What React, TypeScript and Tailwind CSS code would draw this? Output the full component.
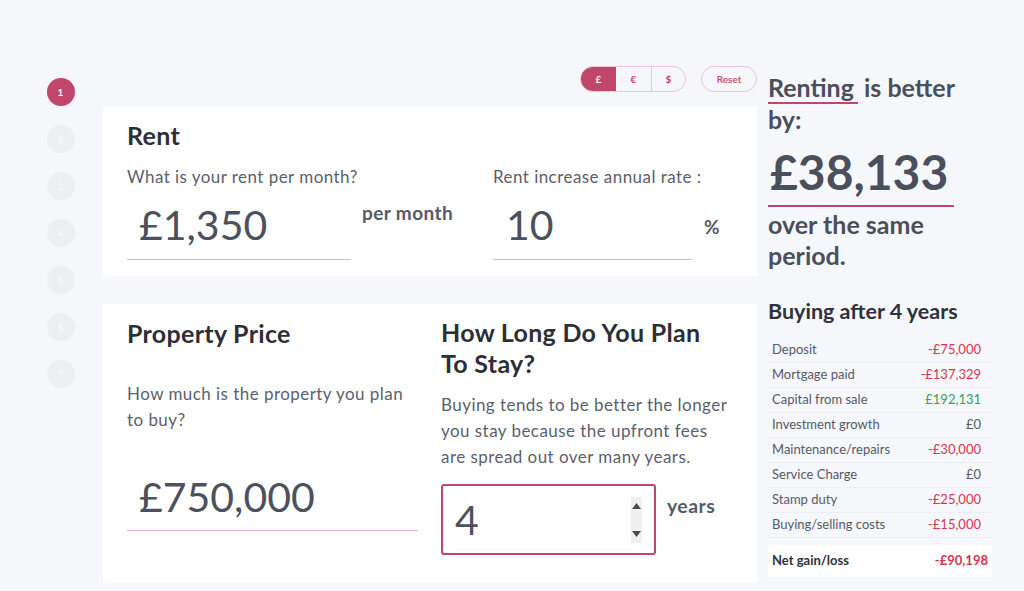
import React from "react";

function Steps() {
  return (
    <div className="w-[103px] shrink-0 flex flex-col items-center pt-[78px] gap-[19px] pl-[18px]">
      {[1, 2, 3, 4, 5, 6, 7].map((n) => (
        <div
          key={n}
          className={
            n === 1
              ? "w-[28px] h-[28px] rounded-full bg-[#c1466b] text-white text-[10px] font-bold flex items-center justify-center"
              : "w-[28px] h-[28px] rounded-full bg-[#eeeff2] text-[#f9f9fb] text-[10px] font-bold flex items-center justify-center"
          }
        >
          {n}
        </div>
      ))}
    </div>
  );
}

function Spinner() {
  return (
    <div className="w-[11px] h-[46px] bg-[#efefef] flex flex-col items-center justify-between py-[6px]">
      <svg width="9" height="6" viewBox="0 0 9 6">
        <path d="M0 6 L4.5 0 L9 6 Z" fill="#4a4a4a" />
      </svg>
      <svg width="9" height="6" viewBox="0 0 9 6">
        <path d="M0 0 L4.5 6 L9 0 Z" fill="#4a4a4a" />
      </svg>
    </div>
  );
}

const rows: [string, string, string][] = [
  ["Deposit", "-£75,000", "red"],
  ["Mortgage paid", "-£137,329", "red"],
  ["Capital from sale", "£192,131", "green"],
  ["Investment growth", "£0", "gray"],
  ["Maintenance/repairs", "-£30,000", "red"],
  ["Service Charge", "£0", "gray"],
  ["Stamp duty", "-£25,000", "red"],
  ["Buying/selling costs", "-£15,000", "red"],
];

export default function App() {
  return (
    <div
      className="w-[1024px] h-[591px] bg-[#f6f7fb] flex overflow-hidden text-[#5b5f6b]"
      style={{ fontFamily: "Lato, 'Noto Sans', sans-serif" }}
    >
      <Steps />
      {/* Main column */}
      <div className="w-[654px] shrink-0 flex flex-col pt-[66px]">
        <div className="flex justify-end items-center gap-[15px] h-[26px]">
          <div className="flex h-[26px] rounded-full border-[1.5px] border-[#ecc8d3] overflow-hidden text-[10px] font-bold">
            <div className="w-[35px] bg-[#c1466b] text-white flex items-center justify-center">£</div>
            <div className="w-[36px] text-[#c1466b] flex items-center justify-center border-r-[1.5px] border-[#ecc8d3]">€</div>
            <div className="w-[33px] text-[#c1466b] flex items-center justify-center">$</div>
          </div>
          <div className="w-[56px] h-[26px] rounded-full border-[1.5px] border-[#ecc8d3] text-[#c1466b] text-[10px] font-semibold flex items-center justify-center">
            Reset
          </div>
        </div>

        {/* Rent panel */}
        <div className="mt-[15px] h-[169px] bg-white pl-[24px] pt-[12px]">
          <h2 className="text-[25px] leading-[32px] font-bold text-[#2d2f36] tracking-[0.3px]">Rent</h2>
          <div className="flex mt-[14px]">
            <div className="w-[366px] shrink-0">
              <div className="text-[17px] leading-[24px] tracking-[0.45px]">What is your rent per month?</div>
              <div className="flex items-start">
                <div className="w-[224px] h-[71px] border-b border-[#e3b5c2] pl-[12px] flex items-center text-[41px] font-normal text-[#4d515c] pt-[2px]">
                  £1,350
                </div>
                <div className="ml-[11px] mt-[10px] text-[19px] font-bold text-[#555a66] tracking-[0.4px]">per month</div>
              </div>
            </div>
            <div>
              <div className="text-[17px] leading-[24px] tracking-[0.45px]">Rent increase annual rate :</div>
              <div className="flex items-start">
                <div className="w-[199px] h-[71px] border-b border-[#e3b5c2] pl-[13px] flex items-center text-[41px] font-normal text-[#4d515c] pt-[2px]">
                  10
                </div>
                <div className="ml-[12px] mt-[24px] text-[19px] font-bold text-[#555a66]">%</div>
              </div>
            </div>
          </div>
        </div>

        {/* Property panel */}
        <div className="mt-[28px] h-[279px] bg-white pl-[24px] pt-[13px] flex">
          <div className="w-[291px] shrink-0">
            <h2 className="text-[25px] leading-[32px] font-bold text-[#2d2f36] tracking-[0.3px]">Property Price</h2>
            <div className="mt-[32px] text-[17px] leading-[26px] w-[291px] tracking-[0.45px]">
              How much is the property you plan to buy?
            </div>
            <div className="mt-[28px] h-[70px] border-b border-[#e3b5c2] pl-[12px] flex items-center text-[41px] font-normal text-[#4d515c] pt-[2px]">
              £750,000
            </div>
          </div>
          <div className="ml-[23px] w-[300px]">
            <h2 className="text-[25px] leading-[31px] font-bold text-[#2d2f36] tracking-[0.3px] w-[285px]">
              How Long Do You Plan To Stay?
            </h2>
            <div className="mt-[13px] text-[17px] leading-[26px] w-[295px] tracking-[0.45px]">
              Buying tends to be better the longer you stay because the upfront fees are spread out over many years.
            </div>
            <div className="flex items-start mt-[14px]">
              <div className="w-[215px] h-[71px] border-2 border-[#c1466b] rounded-[3px] flex items-center justify-between pl-[12px] pr-[12px]">
                <span className="text-[41px] font-normal text-[#4d515c]">4</span>
                <Spinner />
              </div>
              <div className="ml-[11px] mt-[7px] text-[19.5px] font-bold text-[#555a66] tracking-[0.4px]">years</div>
            </div>
          </div>
        </div>
      </div>

      {/* Right column */}
      <div className="ml-[11px] w-[230px] shrink-0 pt-[72px] text-[#4a4f5c]">
        <div className="text-[25px] leading-[31px] font-bold">
          <span className="inline-block border-b-2 border-[#c1466b] leading-[29px] pr-[4px]">Renting</span> is better
          <br />
          by:
        </div>
        <div className="mt-[4px] inline-block text-[48px] leading-[66px] font-bold border-b-2 border-[#c1466b] pl-[2px] pr-[6px]">
          £38,133
        </div>
        <div className="mt-[2px] text-[25px] leading-[31px] font-bold">
          over the same
          <br />
          period.
        </div>
        <div className="mt-[26px] text-[21.5px] leading-[28px] font-bold text-[#2f323a]">Buying after 4 years</div>
        <div className="mt-[13px] w-[224px] text-[13px]">
          {rows.map(([l, v, c]) => (
            <div
              key={l}
              className="h-[25px] flex items-center justify-between pl-[4px] pr-[11px] border-b border-[#eceef3] text-[#555a66]"
            >
              <span>{l}</span>
              <span
                className={
                  c === "red" ? "text-[#d2364e]" : c === "green" ? "text-[#35a152]" : "text-[#555a66]"
                }
              >
                {v}
              </span>
            </div>
          ))}
          <div className="mt-[7px] h-[32px] bg-white flex items-center justify-between pl-[4px] pr-[4px]">
            <span className="font-bold text-[#2f323a]">Net gain/loss</span>
            <span className="font-bold text-[#d2364e]">-£90,198</span>
          </div>
        </div>
      </div>
    </div>
  );
}
